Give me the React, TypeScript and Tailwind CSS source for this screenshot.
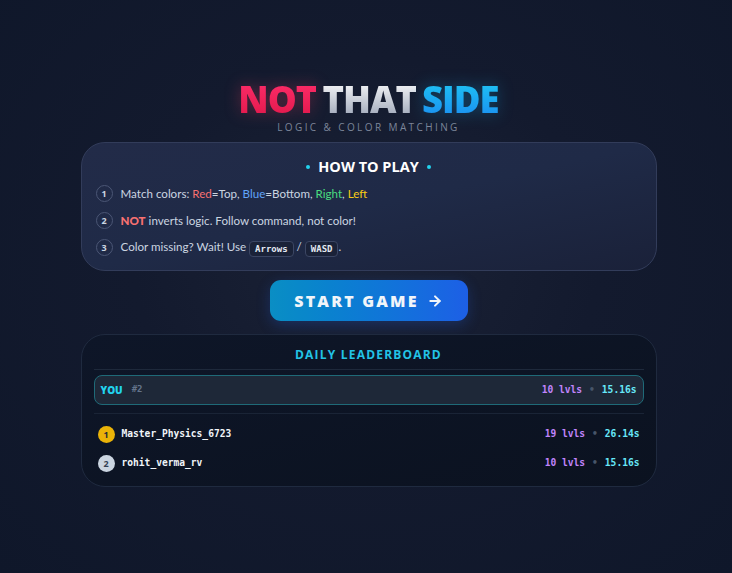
import React from "react";

const sans = { fontFamily: '"Open Sans", "Noto Sans", sans-serif' };
const lato = { fontFamily: 'Lato, "Open Sans", sans-serif' };
const mono = { fontFamily: '"DejaVu Sans Mono", "Liberation Mono", monospace' };

function Step({ n, children }: { n: number; children: React.ReactNode }) {
  return (
    <div className="flex items-center gap-[8px] h-[27px]">
      <div
        className="w-[17px] h-[17px] rounded-full border border-[#4b5675] flex items-center justify-center text-[9px] font-bold text-[#cbd5e1] shrink-0"
        style={sans}
      >
        {n}
      </div>
      <div className="text-[11.6px] text-[#cbd5e1]" style={lato}>
        {children}
      </div>
    </div>
  );
}

function Kbd({ children }: { children: React.ReactNode }) {
  return (
    <span
      className="inline-block px-[5px] leading-[14px] rounded-[4px] border border-[#3b4663] bg-[#1a2238] text-[9px] font-bold text-[#e2e8f0] align-middle"
      style={mono}
    >
      {children}
    </span>
  );
}

function Row({
  rank,
  name,
  lvls,
  time,
  medal,
}: {
  rank: number;
  name: string;
  lvls: string;
  time: string;
  medal: string;
}) {
  return (
    <div className="flex items-center justify-between h-[29px] px-[4px]">
      <div className="flex items-center gap-[7px]">
        <div
          className={`w-[17px] h-[17px] rounded-full flex items-center justify-center text-[9px] font-bold ${medal}`}
          style={sans}
        >
          {rank}
        </div>
        <span className="text-[9.6px] font-bold text-[#f1f5f9]" style={mono}>
          {name}
        </span>
      </div>
      <div className="flex items-center gap-[7px] text-[9.6px] font-bold" style={mono}>
        <span className="text-[#c084fc]">{lvls}</span>
        <span className="text-[#475569]">•</span>
        <span className="text-[#67e8f9]">{time}</span>
      </div>
    </div>
  );
}

export default function App() {
  return (
    <div
      className="w-[732px] h-[573px] overflow-hidden flex flex-col items-center pl-[5px] bg-[radial-gradient(ellipse_at_50%_45%,#1b2236_0%,#131a2e_45%,#0f172a_100%)]"
      style={sans}
    >
      <div className="mt-[78px] flex flex-col items-center">
        <div className="flex items-baseline gap-[6px] text-[36.5px] font-extrabold leading-[42px] tracking-[-1px]">
          <span className="bg-gradient-to-b from-[#ff2d6b] to-[#e0174a] bg-clip-text text-transparent drop-shadow-[0_0_8px_rgba(244,63,94,0.35)]">
            NOT
          </span>
          <span className="bg-gradient-to-b from-[#ffffff] to-[#9aa3b5] bg-clip-text text-transparent">
            THAT
          </span>
          <span className="bg-gradient-to-b from-[#22c7f3] to-[#1d8cf0] bg-clip-text text-transparent drop-shadow-[0_0_8px_rgba(14,165,233,0.35)]">
            SIDE
          </span>
        </div>
        <div className="text-[10px] tracking-[2.4px] text-[#7c8599] leading-[12px] mt-[1px]">
          LOGIC &amp; COLOR MATCHING
        </div>
      </div>

      <div className="mt-[9px] w-[576px] h-[129px] rounded-[24px] border border-[#323c5a] bg-gradient-to-br from-[#222b48] via-[#1f2a47] to-[#1a2139] px-[14px] pt-[14px]">
        <div className="flex items-center justify-center gap-[8px] text-[14.5px] font-bold text-white leading-[20px]">
          <span className="w-[4px] h-[4px] rounded-full bg-[#22d3ee]" />
          HOW TO PLAY
          <span className="w-[4px] h-[4px] rounded-full bg-[#22d3ee]" />
        </div>
        <div className="mt-[3px] flex flex-col">
          <Step n={1}>
            Match colors: <span className="text-[#f87171]">Red</span>=Top,{" "}
            <span className="text-[#60a5fa]">Blue</span>=Bottom,{" "}
            <span className="text-[#4ade80]">Right</span>,{" "}
            <span className="text-[#facc15]">Left</span>
          </Step>
          <Step n={2}>
            <span className="font-black text-[#f87171]">NOT</span> inverts logic. Follow command, not color!
          </Step>
          <Step n={3}>
            Color missing? Wait! Use <Kbd>Arrows</Kbd> / <Kbd>WASD</Kbd>.
          </Step>
        </div>
      </div>

      <button className="mt-[9px] w-[198px] h-[41px] rounded-[11px] bg-gradient-to-r from-[#0a8ec4] to-[#1d5fe6] flex items-center justify-center gap-[8px] text-[16px] font-extrabold tracking-[2.2px] text-[#f1f5f9] shadow-[0_4px_14px_rgba(37,99,235,0.25)]">
        START GAME
        <svg width="16" height="16" viewBox="0 0 24 24" fill="none" stroke="currentColor" strokeWidth="3" strokeLinecap="round" strokeLinejoin="round">
          <path d="M5 12h14" />
          <path d="m12 5 7 7-7 7" />
        </svg>
      </button>

      <div className="mt-[13px] w-[576px] h-[153px] rounded-[24px] border border-[#1f2a3f] bg-gradient-to-br from-[#0e1628] to-[#0b1220] px-[12px] pt-[11px]">
        <div className="text-center text-[12px] font-bold tracking-[1.2px] text-[#22c3e6] leading-[18px]">
          DAILY LEADERBOARD
        </div>
        <div className="mt-[5px] border-t border-[#1e293b]" />
        <div className="mt-[5px] h-[30px] rounded-[8px] border border-[#1f6a78] bg-[#1e2838] flex items-center justify-between px-[6px]">
          <div className="flex items-center gap-[9px]">
            <span className="text-[10px] font-extrabold text-[#22d3ee]">YOU</span>
            <span className="text-[9px] font-bold text-[#64748b]" style={mono}>#2</span>
          </div>
          <div className="flex items-center gap-[7px] text-[9.6px] font-bold" style={mono}>
            <span className="text-[#c084fc]">10 lvls</span>
            <span className="text-[#475569]">•</span>
            <span className="text-[#67e8f9]">15.16s</span>
          </div>
        </div>
        <div className="mt-[8px] border-t border-[#1a2436]" />
        <div className="mt-[6px] flex flex-col">
          <Row rank={1} name="Master_Physics_6723" lvls="19 lvls" time="26.14s" medal="bg-[#eab308] text-[#1f2937]" />
          <Row rank={2} name="rohit_verma_rv" lvls="10 lvls" time="15.16s" medal="bg-[#cbd5e1] text-[#334155]" />
        </div>
      </div>
    </div>
  );
}
